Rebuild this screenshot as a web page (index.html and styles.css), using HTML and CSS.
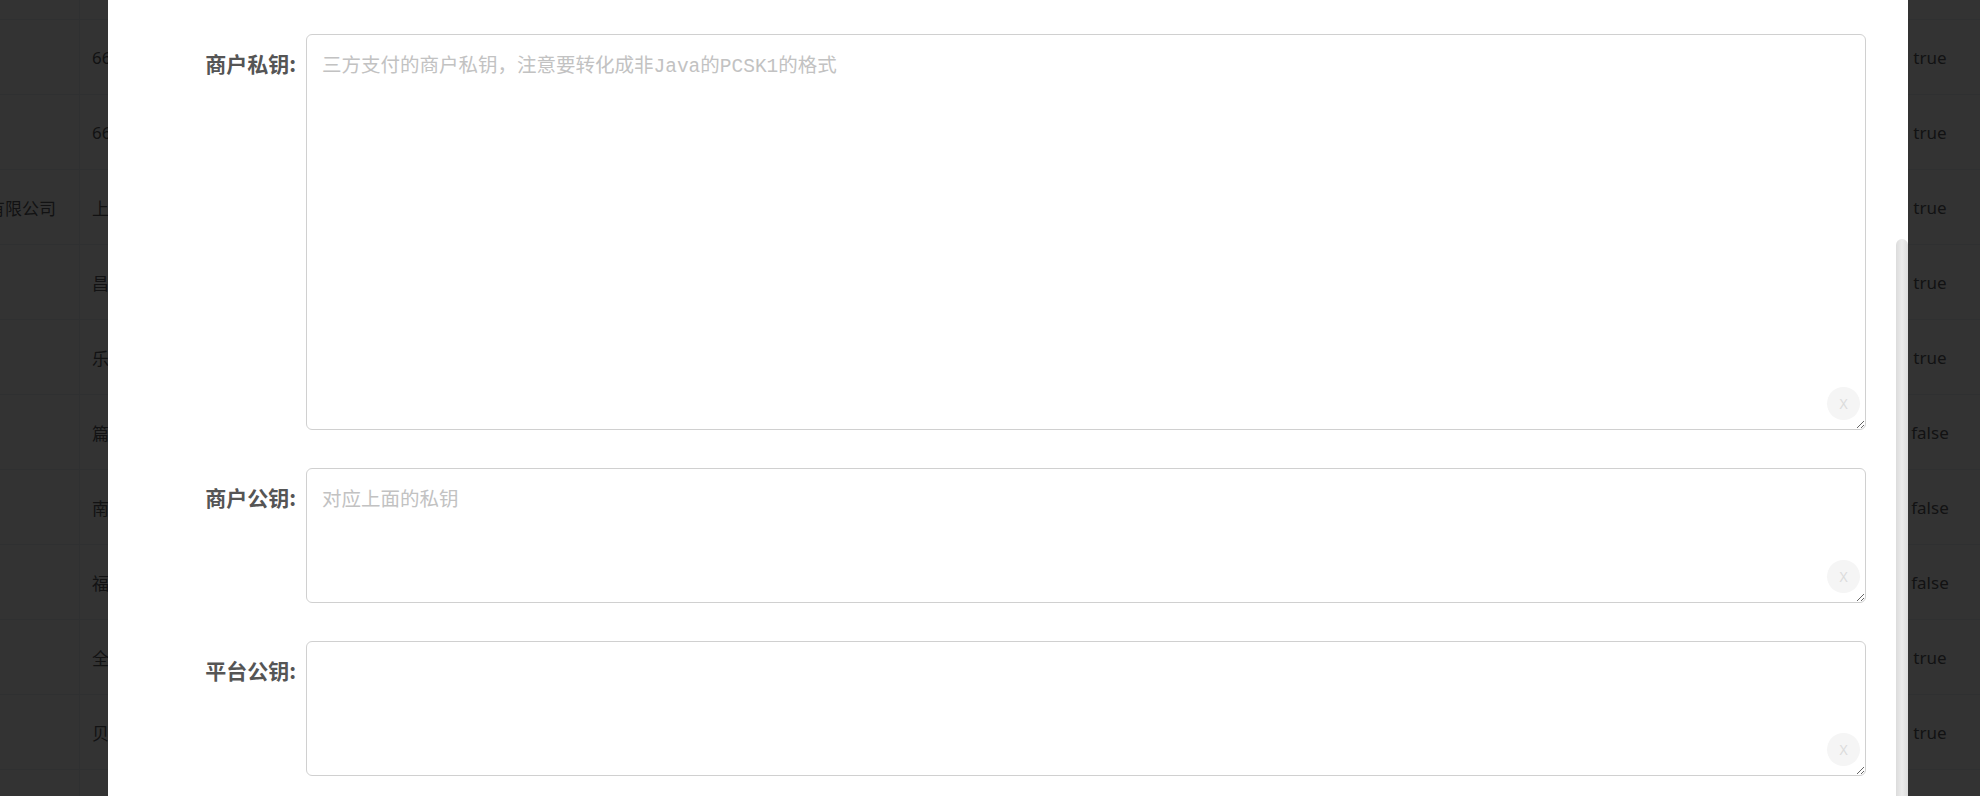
FILE: index.html
```html
<!DOCTYPE html>
<html lang="zh-CN">
<head>
<meta charset="utf-8">
<title>支付配置</title>
<link rel="stylesheet" href="styles.css">
</head>
<body>
<div class="table">
  <div class="row row-partial"><div class="c c1"></div><div class="c c2"></div><div class="c c3"></div></div>
  <div class="row"><div class="c c1"></div><div class="c c2">66010001</div><div class="c c3">true</div></div>
  <div class="row"><div class="c c1"></div><div class="c c2">66010002</div><div class="c c3">true</div></div>
  <div class="row"><div class="c c1"><span>科技有限公司</span></div><div class="c c2">上海</div><div class="c c3">true</div></div>
  <div class="row"><div class="c c1"></div><div class="c c2">昌平</div><div class="c c3">true</div></div>
  <div class="row"><div class="c c1"></div><div class="c c2">乐山</div><div class="c c3">true</div></div>
  <div class="row"><div class="c c1"></div><div class="c c2">篇章</div><div class="c c3">false</div></div>
  <div class="row"><div class="c c1"></div><div class="c c2">南京</div><div class="c c3">false</div></div>
  <div class="row"><div class="c c1"></div><div class="c c2">福州</div><div class="c c3">false</div></div>
  <div class="row"><div class="c c1"></div><div class="c c2">全国</div><div class="c c3">true</div></div>
  <div class="row"><div class="c c1"></div><div class="c c2">贝壳</div><div class="c c3">true</div></div>
  <div class="row"><div class="c c1"></div><div class="c c2"></div><div class="c c3"></div></div>
</div>
<div class="overlay"></div>
<div class="modal">
  <div class="form-item">
    <label class="label">商户私钥:</label>
    <div class="field">
      <textarea class="ta ta-lg" placeholder="三方支付的商户私钥，注意要转化成非Java的PCSK1的格式"></textarea>
      <span class="clear">X</span>
    </div>
  </div>
  <div class="form-item">
    <label class="label">商户公钥:</label>
    <div class="field">
      <textarea class="ta ta-sm" placeholder="对应上面的私钥"></textarea>
      <span class="clear">X</span>
    </div>
  </div>
  <div class="form-item">
    <label class="label">平台公钥:</label>
    <div class="field">
      <textarea class="ta ta-sm"></textarea>
      <span class="clear">X</span>
    </div>
  </div>
  <div class="scroll-thumb"></div>
</div>
</body>
</html>
```

FILE: styles.css
```css
* { box-sizing: border-box; }
html, body { margin: 0; padding: 0; }
body {
  width: 1980px;
  height: 796px;
  overflow: hidden;
  background: #fff;
  font-family: "Noto Sans", "Noto Sans CJK SC", sans-serif;
}

/* background table */
.table { width: 1980px; }
.row {
  display: flex;
  height: 75px;
  border-bottom: 1px solid #ebeef5;
}
.row-partial { height: 20px; }
.c {
  display: flex;
  align-items: center;
  font-size: 17px;
  color: #5a5c60;
  white-space: nowrap;
}
.c1 {
  width: 80px;
  border-right: 1px solid #ebeef5;
  justify-content: flex-end;
  padding-right: 23px;
}
.c2 {
  flex: 1;
  padding-left: 12px;
}
.c3 {
  width: 60px;
  margin-right: 20px;
  justify-content: center;
}

.overlay {
  position: fixed;
  inset: 0;
  background: rgba(0, 0, 0, 0.8);
}

/* modal */
.modal {
  position: fixed;
  left: 108px;
  top: 0;
  width: 1800px;
  height: 796px;
  background: #fff;
  overflow: hidden;
  padding: 34px 42px 0 0;
}
.form-item {
  display: flex;
  margin-bottom: 38px;
}
.label {
  width: 198px;
  flex: none;
  padding: 14px 10px 0 0;
  text-align: right;
  font-size: 21px;
  line-height: 30px;
  font-weight: 700;
  color: #555;
  font-family: "Noto Sans CJK SC", sans-serif;
}
.field {
  flex: 1;
  display: flex;
  position: relative;
}
.ta {
  flex: 1;
  display: block;
  margin: 0;
  border: 1px solid #d0d0d0;
  border-radius: 6px;
  padding: 18px 15px 14px;
  font-family: "Liberation Mono", "Noto Sans CJK SC", monospace;
  font-size: 19.5px;
  line-height: 28px;
  color: #333;
  background: #fff;
  resize: vertical;
  outline: none;
}
.ta::placeholder { color: #c2c2c2; }
.ta-lg { height: 396px; }
.ta-sm { height: 135px; }
.clear {
  position: absolute;
  right: 6px;
  bottom: 10px;
  width: 33px;
  height: 33px;
  border-radius: 50%;
  background: #f5f5f5;
  color: #dcdcdc;
  font-size: 14px;
  line-height: 33px;
  text-align: center;
  font-family: "Noto Sans", sans-serif;
}
.scroll-thumb {
  position: absolute;
  right: 0;
  top: 239px;
  width: 12px;
  height: 700px;
  border-radius: 6px 6px 0 0;
  background: linear-gradient(to right, #dcdcdc, #ebebeb 50%, #dcdcdc);
}
```
